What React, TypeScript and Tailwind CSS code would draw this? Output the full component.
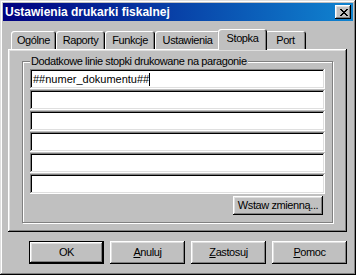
const RAISED =
  'shadow-[inset_-1px_-1px_#000,inset_1px_1px_#fff,inset_-2px_-2px_#808080,inset_2px_2px_#dfdfdf]'
const SUNKEN =
  'shadow-[inset_-1px_-1px_#fff,inset_1px_1px_#808080,inset_-2px_-2px_#dfdfdf,inset_2px_2px_#000]'

const TABS = [
  { label: 'Ogólne', w: 'w-[45px]' },
  { label: 'Raporty', w: 'w-[49px]' },
  { label: 'Funkcje', w: 'w-[50px]' },
  { label: 'Ustawienia', w: 'w-[65px]' },
  { label: 'Stopka', w: 'w-[49px]', active: true },
  { label: 'Port', w: 'w-[41px]' },
]

const LINES = ['##numer_dokumentu##', '', '', '', '', '']

// Win98 close glyph, 8x7 pixels
const X_PIXELS = [
  'XX....XX',
  '.XX..XX.',
  '..XXXX..',
  '...XX...',
  '..XXXX..',
  '.XX..XX.',
  'XX....XX',
]

function CloseGlyph() {
  return (
    <svg width="8" height="7" viewBox="0 0 8 7" shapeRendering="crispEdges">
      {X_PIXELS.flatMap((row, y) =>
        row.split('').map((c, x) => (c === 'X' ? <rect key={`${x}-${y}`} x={x} y={y} width="1" height="1" fill="#000" /> : null))
      )}
    </svg>
  )
}

function Btn({ children, isDefault }: { children: React.ReactNode; isDefault?: boolean }) {
  return (
    <div className={`w-[75px] h-[23px] ${isDefault ? 'border border-black' : ''}`}>
      <div className={`h-full w-full bg-[#c0c0c0] flex items-center justify-center ${RAISED}`}>{children}</div>
    </div>
  )
}

export default function App() {
  return (
    <div
      className={`w-[356px] h-[275px] bg-[#c0c0c0] p-[3px] flex flex-col font-['Liberation_Sans',Arial,sans-serif] text-[11px] text-black tracking-[-0.4px] select-none ${'shadow-[inset_-1px_-1px_#000,inset_1px_1px_#dfdfdf,inset_-2px_-2px_#808080,inset_2px_2px_#fff]'}`}
    >
      {/* Title bar */}
      <div className="h-[18px] flex items-center justify-between pl-[2px] pr-[2px] bg-[linear-gradient(90deg,#000080,#1084d0)]">
        <span className="text-white font-bold text-[12px] tracking-normal leading-none">Ustawienia drukarki fiskalnej</span>
        <div className={`w-[16px] h-[14px] bg-[#c0c0c0] flex items-center justify-center pl-[1px] ${RAISED}`}>
          <CloseGlyph />
        </div>
      </div>

      <div className="flex-1 pl-[5px] pt-[8px]">
        {/* Tabs */}
        <div className="h-[20px] flex items-end pl-[3px]">
          {TABS.map((t) =>
            t.active ? (
              <div
                key={t.label}
                className={`relative z-10 -mx-[2px] -mb-[1px] h-[21px] w-[49px] bg-[#c0c0c0] rounded-t-[3px] flex items-center justify-center pb-[2px] shadow-[inset_1px_1px_#fff,inset_-1px_0_#000,inset_-2px_0_#808080]`}
              >
                {t.label}
              </div>
            ) : (
              <div
                key={t.label}
                className={`${t.w} h-[18px] rounded-t-[3px] flex items-center justify-center pt-[1px] shadow-[inset_1px_1px_#fff,inset_-1px_0_#000,inset_-2px_0_#808080]`}
              >
                {t.label}
              </div>
            )
          )}
        </div>

        {/* Tab panel */}
        <div className={`w-[339px] h-[183px] px-[14px] pt-[6px] ${RAISED}`}>
          <fieldset className="h-[168px] border border-[#808080] shadow-[inset_1px_1px_#fff,1px_1px_#fff] px-[7px] pt-[2px]">
            <legend className="-ml-[0px] px-[1px] leading-[12px] bg-[#c0c0c0]">
              Dodatkowe linie stopki drukowane na paragonie
            </legend>
            <div className="flex flex-col gap-[1px]">
              {LINES.map((line, i) => (
                <div
                  key={i}
                  className={`w-[295px] h-[20px] bg-white flex items-center pl-[3px] tracking-normal ${SUNKEN}`}
                >
                  {line}
                  {i === 0 && <span className="w-[1px] h-[13px] bg-black" />}
                </div>
              ))}
            </div>
            <div className="flex justify-end pr-[2px] mt-[2px]">
              <div className={`w-[90px] h-[19px] flex items-center justify-center ${RAISED}`}>Wstaw zmienną...</div>
            </div>
          </fieldset>
        </div>

        {/* Dialog buttons */}
        <div className="flex gap-[6px] ml-[21px] mt-[9px]">
          <Btn isDefault>OK</Btn>
          <Btn>
            <span>
              <u>A</u>nuluj
            </span>
          </Btn>
          <Btn>
            <span>
              <u>Z</u>astosuj
            </span>
          </Btn>
          <Btn>
            <span>
              <u>P</u>omoc
            </span>
          </Btn>
        </div>
      </div>
    </div>
  )
}
